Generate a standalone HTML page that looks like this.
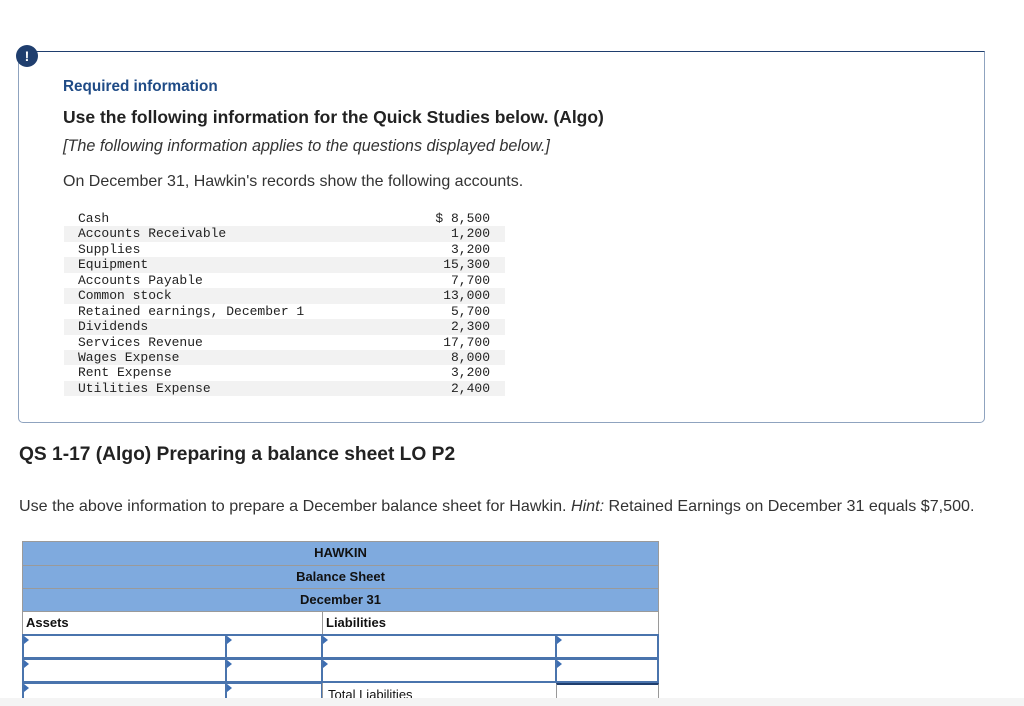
<!DOCTYPE html>
<html><head><meta charset="utf-8"><style>
body{margin:0;width:1024px;height:706px;background:#fff;position:relative;overflow:hidden;font-family:"Liberation Sans",sans-serif;color:#222}
.abs{position:absolute;white-space:nowrap}
.box{position:absolute;left:18px;top:51px;width:965px;height:370px;border:1px solid #8fa3bf;border-top:1.5px solid #1f3e6e;border-radius:0 0 5px 5px}
.icon{position:absolute;left:16px;top:45px;width:22px;height:22px;border-radius:50%;background:#1f3e6e;color:#fff;font-weight:bold;font-size:14px;text-align:center;line-height:22px}
.acct{position:absolute;left:64px;top:211px;width:441px;font-family:"Liberation Mono",monospace;font-size:13px;color:#222}
.acct div{height:15.45px;line-height:16px;position:relative;padding-left:14px}
.acct div:nth-child(even){background:#f2f2f2}
.acct span{position:absolute;right:15px;top:0}
.c{position:absolute;box-sizing:border-box;font-size:13px;font-weight:bold;color:#111}
.h{background:#7faade;border:1px solid #9a9a9a;text-align:center;line-height:22px;left:22px;width:637px}
.l{border:1px solid #9a9a9a;line-height:22px;padding-left:3px;height:24px}
.i{border:2px solid #4a74ad;height:25px}
.i:before{content:"";position:absolute;left:0;top:0;border-left:5px solid #3d6eb3;border-top:4px solid transparent;border-bottom:4px solid transparent}
</style></head><body>
<div class="box"></div>
<div class="icon">!</div>
<div class="abs" style="left:63px;top:78px;font-size:15.3px;font-weight:bold;color:#1f4b86">Required information</div>
<div class="abs" style="left:63px;top:107px;font-size:17.5px;font-weight:bold;color:#222">Use the following information for the Quick Studies below. (Algo)</div>
<div class="abs" style="left:63px;top:137px;font-size:16.2px;font-style:italic;color:#333">[The following information applies to the questions displayed below.]</div>
<div class="abs" style="left:63px;top:173px;font-size:16px;color:#333">On December 31, Hawkin's records show the following accounts.</div>
<div class="acct">
<div>Cash<span>$ 8,500</span></div>
<div>Accounts Receivable<span>1,200</span></div>
<div>Supplies<span>3,200</span></div>
<div>Equipment<span>15,300</span></div>
<div>Accounts Payable<span>7,700</span></div>
<div>Common stock<span>13,000</span></div>
<div>Retained earnings, December 1<span>5,700</span></div>
<div>Dividends<span>2,300</span></div>
<div>Services Revenue<span>17,700</span></div>
<div>Wages Expense<span>8,000</span></div>
<div>Rent Expense<span>3,200</span></div>
<div>Utilities Expense<span>2,400</span></div>
</div>
<div class="abs" style="left:19px;top:444px;font-size:19.2px;font-weight:bold;color:#222">QS 1-17 (Algo) Preparing a balance sheet LO P2</div>
<div class="abs" style="left:19px;top:497px;font-size:16.1px;color:#333">Use the above information to prepare a December balance sheet for Hawkin. <i>Hint:</i> Retained Earnings on December 31 equals $7,500.</div>

<div class="c h" style="top:541px;height:25px">HAWKIN</div>
<div class="c h" style="top:565px;height:24px">Balance Sheet</div>
<div class="c h" style="top:588px;height:24px">December 31</div>
<div class="c l" style="top:611px;left:22px;width:301px">Assets</div>
<div class="c l" style="top:611px;left:322px;width:337px">Liabilities</div>

<div class="c i" style="top:634px;left:22px;width:205px"></div>
<div class="c i" style="top:634px;left:225px;width:98px"></div>
<div class="c i" style="top:634px;left:321px;width:236px"></div>
<div class="c i" style="top:634px;left:555px;width:104px"></div>
<div class="c i" style="top:658px;left:22px;width:205px"></div>
<div class="c i" style="top:658px;left:225px;width:98px"></div>
<div class="c i" style="top:658px;left:321px;width:236px"></div>
<div class="c i" style="top:658px;left:555px;width:104px"></div>
<div class="c i" style="top:682px;left:22px;width:205px;height:16px;border-bottom:none"></div>
<div class="c i" style="top:682px;left:225px;width:98px;height:16px;border-bottom:none"></div>
<div class="c" style="top:683px;left:322px;width:235px;height:15px;border-left:1px solid #999;font-weight:normal;padding-left:5px;line-height:24px;overflow:hidden">Total Liabilities</div>
<div class="c" style="top:683px;left:556px;width:103px;height:15px;border-left:1px solid #999;border-right:1px solid #999;border-top:2px solid #1f3e6e"></div>
<div style="position:absolute;left:0;top:698px;width:1024px;height:8px;background:#f4f4f4;z-index:5"></div>
</body></html>
